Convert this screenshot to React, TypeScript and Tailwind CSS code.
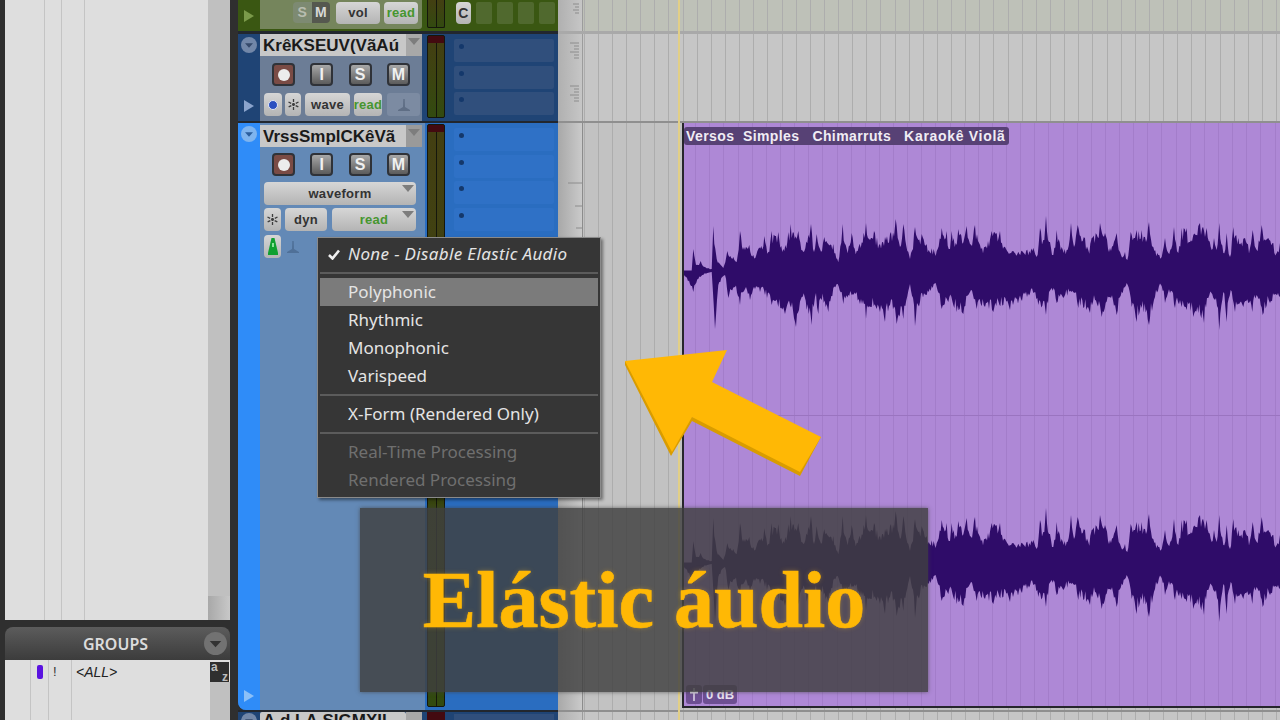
import React from "react";

const topA = [36,0.5,65,0.5,70,22,78,6,92,10,105,4,125,2,130,45,140,12,160,3,172,20,190,14,200,9,210,40,222,24,238,26,250,16,265,22,283,35,295,19,305,40,315,35,325,39,340,22,362,47,385,40,400,19,423,47,432,19,440,37,450,22,463,34,475,27,490,27,505,9,518,47,530,22,545,38,560,20,588,48,600,31,612,40,630,27,645,34,660,37,677,52,690,24,700,47,720,12,735,44,745,31,755,37,770,27,800,20,815,43,830,40,840,22,845,40,860,26,865,42,885,36,890,45,900,27,915,46,930,26,945,24,965,40,990,40,1005,24,1030,20];
const botA = [36,0.5,70,21,85,8,100,4,125,1,135,58,145,14,165,4,175,27,195,16,210,34,225,18,240,29,255,18,285,24,305,34,325,36,345,43,360,34,378,56,395,26,425,54,435,26,445,43,455,29,475,41,500,13,520,33,545,24,570,33,588,48,605,36,630,41,645,51,660,34,680,53,700,48,720,13,735,55,750,31,770,24,800,16,815,38,835,31,860,41,880,43,900,21,920,38,945,36,970,41,1000,34,1020,39];
const topB = [340,23,350,14,360,43,370,31,378,55,390,29,400,16,410,41,425,24,440,21,453,48,462,24,473,46,495,33,505,21,515,33,540,48,555,38,570,23,590,38,600,19,615,19,622,11,632,39,645,33,650,41,665,41,675,34,687,49,700,24,718,16,725,14,735,33,745,18,762,44,775,18,785,43,800,43,810,29,820,36,840,48,860,43,875,21,882,33,890,21,898,48,910,18,920,38,930,14,940,44,955,33,975,33,990,23,998,41,1010,21,1025,46,1045,33,1060,28,1070,18,1080,28];
const botB = [340,22,355,34,378,44,395,17,410,32,430,27,465,22,475,37,490,37,510,42,525,29,545,46,570,26,590,44,620,12,635,36,650,51,665,37,687,54,705,26,725,15,735,32,750,22,765,37,785,36,800,39,820,46,835,42,852,52,865,27,885,29,898,59,910,21,920,51,932,19,945,41,970,36,985,32,997,41,1010,24,1028,44,1050,32,1080,26];

function pts(a: number[], ox: number) {
  const out: [number, number][] = [];
  for (let i = 0; i < a.length; i += 2) out.push([ox + a[i] / 3, a[i + 1]]);
  return out;
}

function dense(p: [number, number][], seedStart: number) {
  let seed = seedStart;
  const rnd = () => {
    seed = (seed * 16807) % 2147483647;
    return seed / 2147483647;
  };
  const out: [number, number][] = [];
  for (let i = 0; i < p.length - 1; i++) {
    const [x0, a] = p[i];
    const [x1, b] = p[i + 1];
    out.push([x0, a]);
    const steps = Math.floor(x1 - x0);
    for (let s = 1; s < steps; s++) {
      const t = s / (x1 - x0);
      const h = a + (b - a) * t;
      out.push([x0 + (x1 - x0) * t, h * (1 - 0.3 * rnd())]);
    }
  }
  out.push(p[p.length - 1]);
  return out;
}

function wavePath(cy: number) {
  const top = dense([...pts(topA, 670), ...pts(topB, 920)], 4711);
  const bot = dense([...pts(botA, 670), ...pts(botB, 920)], 90210);
  const t = top.map(([x, h]) => `${x.toFixed(1)} ${(cy - h).toFixed(1)}`);
  const b = bot.reverse().map(([x, h]) => `${x.toFixed(1)} ${(cy + h).toFixed(1)}`);
  return `M${t.join("L")}L${b.join("L")}Z`;
}

const sans = "font-['Liberation_Sans',Arial,sans-serif]";

function Tri({ color }: { color: string }) {
  return (
    <svg width="12" height="12" viewBox="0 0 12 12">
      <path d="M1 0L11 6L1 12Z" fill={color} />
    </svg>
  );
}

function RoundArrow({ bg, fg, size = 16 }: { bg: string; fg: string; size?: number }) {
  return (
    <svg width={size} height={size} viewBox="0 0 18 18">
      <circle cx="9" cy="9" r="9" fill={bg} />
      <path d="M4.500 7H13.500L9 12Z" fill={fg} />
    </svg>
  );
}

function Caret({ color = "#7d7d7d" }: { color?: string }) {
  return (
    <svg width="12" height="7" viewBox="0 0 12 7">
      <path d="M0 0H12L6 7Z" fill={color} />
    </svg>
  );
}

function Snow() {
  return (
    <svg width="11" height="11" viewBox="0 0 11 11" stroke="#3d3d3d" strokeWidth="1.300" strokeDasharray="3 1">
      <path d="M5.500 0V11M0.500 3L10.500 8M10.500 3L0.500 8" />
    </svg>
  );
}

function Timebase({ color }: { color: string }) {
  return (
    <svg width="14" height="14" viewBox="0 0 14 14">
      <path d="M6.300 1H7.700L8 9L13 12V13H1V12L6 9Z" fill={color} />
    </svg>
  );
}

function Pill({ children, className }: { children: React.ReactNode; className: string }) {
  return (
    <div
      className={`flex items-center justify-center rounded-[4px] bg-gradient-to-b from-[#d6d6d6] to-[#b4b4b4] text-[13px] font-bold tracking-[0.3px] ${sans} ${className}`}
    >
      {children}
    </div>
  );
}

function Square({ letter, rec }: { letter?: string; rec?: boolean }) {
  return (
    <div
      className={`flex h-[23px] w-[23px] items-center justify-center rounded-[4px] border-2 border-[#2f3238] ${
        rec ? "bg-[#7a4b45]" : "bg-gradient-to-b from-[#a8a8a8] to-[#5c5c5c]"
      } text-[16px] font-bold leading-none text-[#f0f0f0] ${sans}`}
    >
      {rec ? <div className="h-[12px] w-[12px] rounded-full bg-[#ececec]" /> : letter}
    </div>
  );
}

function RecRow() {
  return (
    <div className="flex w-[138px] justify-between">
      <Square rec />
      <Square letter="I" />
      <Square letter="S" />
      <Square letter="M" />
    </div>
  );
}

function NameBar({ name, caretBg }: { name: string; caretBg: string }) {
  return (
    <div className="flex h-[22px] w-[162px]">
      <div
        className={`flex flex-1 items-center overflow-hidden whitespace-nowrap bg-[#c8c8c8] pl-[3px] text-[17px] font-bold leading-none text-[#1a1a1a] ${sans}`}
      >
        {name}
      </div>
      <div className={`flex w-[16px] justify-center pt-[4px] ${caretBg}`}>
        <Caret />
      </div>
    </div>
  );
}

function Meter({ h, className = "" }: { h: string; className?: string }) {
  return (
    <div className={`flex w-[18px] flex-col overflow-hidden rounded-[2px] border border-[#15170c] bg-[#15170c] ${h} ${className}`}>
      <div className="h-[7px] shrink-0 bg-[#430a10]" />
      <div className="flex flex-1 gap-[1px]">
        <div className="flex-1 bg-gradient-to-b from-[#433f12] to-[#324a10]" />
        <div className="flex-1 bg-gradient-to-b from-[#433f12] to-[#324a10]" />
      </div>
    </div>
  );
}

function Cell({ className }: { className: string }) {
  return (
    <div className={`h-[23px] w-[100px] rounded-[2px] pl-[5px] pt-[5px] ${className}`}>
      <div className="h-[5px] w-[5px] rounded-full bg-[#14386b]" />
    </div>
  );
}

function Ticks() {
  const lines = [];
  for (const start of [9, 52]) {
    for (let i = 0; i < 6; i++) {
      const y = start + i * 3;
      lines.push(<path key={`${start}-${i}`} d={`M${i % 3 === 0 ? 12 : 16} ${y}H21`} stroke="#8c8c8c" strokeWidth="1" />);
    }
  }
  return (
    <svg width="24" height="87" viewBox="0 0 24 87">
      {lines}
    </svg>
  );
}

function TopTicks() {
  return (
    <svg width="24" height="31" viewBox="0 0 24 31">
      <path d="M15 4H21M17 7H21M15 10H21M17 13H21" stroke="#8c8c8c" strokeWidth="1" />
    </svg>
  );
}

function BigTicks() {
  return (
    <svg width="24" height="120" viewBox="0 0 24 120">
      <path d="M10 60H24M17 83H24M18 105H24" stroke="#8c8c8c" strokeWidth="1" />
    </svg>
  );
}

const gridGray =
  "bg-[repeating-linear-gradient(90deg,transparent_0_0.7px,#adadad_0.7px_1.7px,transparent_1.7px_14.13px)]";

export default function App() {
  return (
    <div className={`relative flex h-[720px] w-[1280px] overflow-hidden bg-[#2f2f2f] ${sans}`}>
      {/* Left sidebar */}
      <div className="flex w-[238px] shrink-0 flex-col pl-[5px] pr-[8px]">
        <div className="flex h-[620px] shrink-0 bg-[#dedede]">
          <div className="w-[40px] border-r border-[#c4c4c4]" />
          <div className="w-[17px] border-r border-[#c4c4c4]" />
          <div className="w-[23px] border-r border-[#c4c4c4]" />
          <div className="flex-1" />
          <div className="flex w-[22px] flex-col justify-end bg-[#c0c0c0]">
            <div className="h-[24px] bg-gradient-to-r from-[#a8a8a8] to-[#c8c8c8]" />
          </div>
        </div>
        <div className="mt-[7px] flex h-[33px] shrink-0 items-center rounded-t-[8px] bg-gradient-to-b from-[#5c5c5c] to-[#3c3c3c] pr-[3px]">
          <div className="flex-1 pl-[22px] text-center text-[16px] font-semibold text-[#dcdcdc] font-['Noto_Sans',sans-serif]">GROUPS</div>
          <RoundArrow bg="#727272" fg="#333333" size={23} />
        </div>
        <div className="flex flex-1 bg-[#dedede]">
          <div className="w-[26px] border-r border-[#c4c4c4]" />
          <div className="flex w-[18px] justify-center border-r border-[#c4c4c4]">
            <div className="flex w-full gap-[4px] pl-[6px] pt-[5px]">
              <div className="h-[14px] w-[6px] rounded-[2px] bg-[#5a12e0]" />
            </div>
          </div>
          <div className="w-[23px] border-r border-[#c4c4c4] pl-[4px] pt-[3px] text-[13px] leading-[18px] text-[#333]">!</div>
          <div className="flex-1 pl-[4px] pt-[3px] text-[14px] italic leading-[18px] text-[#222]">&lt;ALL&gt;</div>
          <div className="flex w-[20px] flex-col">
            <div className="mt-[2px] flex h-[20px] w-[19px] flex-col bg-[#2f2f2f] px-[1px] text-[12px] font-bold leading-[10px] text-[#bdbdbd]">
              <span className="self-start">a</span>
              <span className="self-end">z</span>
            </div>
            <div className="flex-1 bg-[#c0c0c0]" />
          </div>
        </div>
      </div>

      {/* Track rows */}
      <div className="flex flex-1 flex-col">
        {/* Green track */}
        <div className="flex h-[31px] shrink-0">
          <div className="flex w-[320px] bg-[#3a5712]">
            <div className="flex w-[22px] items-end justify-center pb-[9px]">
              <Tri color="#7b9a4a" />
            </div>
            <div className="flex h-[29px] w-[162px] items-start rounded-br-[3px] bg-[#75855c] pl-[33px] pt-[2px]">
              <div className="flex h-[21px] w-[37px] overflow-hidden rounded-[4px] text-[14px] font-bold leading-[21px] text-[#d8d8d8]">
                <div className="w-1/2 bg-[#7d8a72] text-center text-[#b8bdb0]">S</div>
                <div className="w-1/2 bg-[#55584f] text-center">M</div>
              </div>
              <Pill className="ml-[6px] h-[22px] w-[44px] text-[#333]">vol</Pill>
              <Pill className="ml-[4px] h-[22px] w-[34px] text-[#46962f]">read</Pill>
            </div>
            <Meter h="h-[28px]" className="ml-[5px] rounded-t-none border-t-0 [&>div:first-child]:hidden" />
            <div className="ml-[11px] mt-[2px] flex h-[22px] items-start gap-[5px]">
              <Pill className="h-[22px] w-[15px] text-[14px] text-[#333]">C</Pill>
              <div className="h-[22px] w-[16px] rounded-[2px] bg-[#50692e]" />
              <div className="h-[22px] w-[16px] rounded-[2px] bg-[#50692e]" />
              <div className="h-[22px] w-[16px] rounded-[2px] bg-[#50692e]" />
              <div className="h-[22px] w-[16px] rounded-[2px] bg-[#50692e]" />
            </div>
          </div>
          <div className="w-[24px] bg-gradient-to-r from-[#b0b0b0] to-[#c6c6c6]">
            <TopTicks />
          </div>
          <div className={`flex-1 border-l border-[#9c9c9c] bg-[#bec1b8] ${gridGray}`} />
        </div>
        <div className="flex h-[3px] shrink-0">
          <div className="w-[320px] bg-[#22272e]" />
          <div className="flex-1 bg-[#a9a9a9]" />
        </div>

        {/* Blue track */}
        <div className="flex h-[87px] shrink-0">
          <div className="flex w-[320px] bg-[#1f4475]">
            <div className="flex w-[22px] flex-col items-center justify-between pb-[9px] pt-[3px]">
              <RoundArrow bg="#7287a8" fg="#35496a" />
              <Tri color="#8ba4cc" />
            </div>
            <div className="flex w-[162px] flex-col bg-[#6c7d96]">
              <NameBar name="KrêKSEUV(VãAú" caretBg="bg-[#a8a8a8]" />
              <div className="mt-[7px] flex pl-[12px]">
                <RecRow />
              </div>
              <div className="ml-[4px] mt-[7px] flex items-center">
                <Pill className="h-[23px] w-[18px]">
                  <div className="h-[10px] w-[10px] rounded-full border border-[#dfe5f4] bg-[#2a4fc0]" />
                </Pill>
                <Pill className="ml-[3px] h-[23px] w-[16px]">
                  <Snow />
                </Pill>
                <Pill className="ml-[4px] h-[23px] w-[45px] text-[#333]">wave</Pill>
                <Pill className="ml-[4px] h-[23px] w-[28px] overflow-hidden text-[#46962f]">read</Pill>
                <div className="ml-[5px] flex h-[23px] w-[33px] items-center justify-center rounded-[3px] bg-[#7c8ba2]">
                  <Timebase color="#5f6e85" />
                </div>
              </div>
            </div>
            <Meter h="h-[83px]" className="ml-[5px] mt-[1px]" />
            <div className="ml-[9px] flex flex-col gap-[3.5px] pt-[5px]">
              <Cell className="bg-[#304f7c]" />
              <Cell className="bg-[#304f7c]" />
              <Cell className="bg-[#304f7c]" />
            </div>
          </div>
          <div className="w-[24px] bg-gradient-to-r from-[#b0b0b0] to-[#c6c6c6]">
            <Ticks />
          </div>
          <div className={`flex-1 border-l border-[#9c9c9c] bg-[#c6c6c6] ${gridGray}`} />
        </div>
        <div className="flex h-[2px] shrink-0">
          <div className="w-[320px] bg-[#22272e]" />
          <div className="flex-1 bg-[#8f8f8f]" />
        </div>

        {/* Selected track */}
        <div className="flex h-[587px] shrink-0">
          <div className="flex w-[320px] rounded-bl-[8px] bg-[#2a6dc0]">
            <div className="flex w-[22px] flex-col items-center justify-between rounded-bl-[8px] bg-[#2f8cf8] pb-[8px] pt-[3px]">
              <RoundArrow bg="#7fb4ee" fg="#2b5e9d" />
              <Tri color="#8cc0f8" />
            </div>
            <div className="flex w-[165px] flex-col bg-[#6389b6]">
              <div className="mt-[2px]">
                <NameBar name="VrssSmplCKêVã" caretBg="bg-[#9a9a9a]" />
              </div>
              <div className="mt-[6px] flex pl-[12px]">
                <RecRow />
              </div>
              <Pill className="relative ml-[4px] mt-[6px] h-[23px] w-[152px] text-[#333]">
                waveform
                <div className="absolute right-[2px] top-[3px]">
                  <Caret />
                </div>
              </Pill>
              <div className="ml-[4px] mt-[3px] flex">
                <Pill className="h-[23px] w-[17px]">
                  <Snow />
                </Pill>
                <Pill className="ml-[4px] h-[23px] w-[42px] text-[#333]">dyn</Pill>
                <Pill className="relative ml-[5px] h-[23px] w-[84px] text-[#46962f]">
                  read
                  <div className="absolute right-[2px] top-[3px]">
                    <Caret />
                  </div>
                </Pill>
              </div>
              <div className="ml-[4px] mt-[4px] flex items-center">
                <Pill className="h-[23px] w-[17px]">
                  <svg width="10" height="17" viewBox="0 0 10 17">
                    <path d="M3.500 0H6.500L10 15V17H0V15Z" fill="#10a030" />
                    <path d="M4 5H6V9H4Z" fill="#8ae29a" />
                  </svg>
                </Pill>
                <div className="ml-[5px]">
                  <Timebase color="#4f7098" />
                </div>
              </div>
            </div>
            <div className="flex flex-col">
              <Meter h="h-[583px]" className="ml-[2px] mt-[1px]" />
            </div>
            <div className="ml-[9px] flex flex-col gap-[3.5px] pt-[5px]">
              <Cell className="bg-[#2f71c6]" />
              <Cell className="bg-[#2f71c6]" />
              <Cell className="bg-[#2f71c6]" />
              <Cell className="bg-[#2f71c6]" />
            </div>
          </div>
          <div className="w-[24px] bg-gradient-to-r from-[#a8a8a8] to-[#cacaca]">
            <BigTicks />
          </div>
          <div className={`flex flex-1 border-l border-[#8c8c8c] bg-[#c2c2c2] ${gridGray} pl-[99px]`}>
            <div className="relative mb-[2px] flex-1 border-b-2 border-l-2 border-[#26262c] bg-[#ae88d6] bg-[repeating-linear-gradient(90deg,transparent_0_11.2px,#a37dca_11.2px_12.2px,transparent_12.2px_14.13px)]">
              <div className="absolute inset-x-0 top-[292px] h-[1px] bg-[#9a74c0]" />
              <svg className="absolute inset-0 h-[585px] w-[596px]" viewBox="684 123 596 585">
                <path d={wavePath(271)} fill="#2f0c69" />
                <path d={wavePath(563)} fill="#2f0c69" />
              </svg>
              <div className="absolute left-0 top-[4px] flex h-[18px] items-center gap-[13px] whitespace-pre rounded-[3px] bg-[#574175] pl-[2px] pr-[3px] text-[14px] font-bold tracking-[0.4px] text-[#f0ecf4]">
                <span>Versos  Simples</span>
                <span>Chimarruts</span>
                <span className="tracking-[0.7px]">Karaokê Violã</span>
              </div>
              <div className="absolute bottom-[2px] left-[2px] flex h-[19px] items-center gap-[1px] text-[13px] font-bold text-[#e8e2f0]">
                <div className="flex h-[19px] w-[16px] items-center justify-center rounded-[3px] bg-[#6d4f92]">
                  <svg width="8" height="13" viewBox="0 0 8 13" fill="#e8e2f0">
                    <path d="M3.300 0H4.700V3H8V5.500H4.700V13H3.300V5.500H0V3H3.300Z" />
                  </svg>
                </div>
                <div className="rounded-[3px] bg-[#6d4f92] px-[3px] leading-[19px]">0 dB</div>
              </div>
            </div>
          </div>
        </div>
        <div className="flex h-[2px] shrink-0">
          <div className="w-[320px] bg-[#22272e]" />
          <div className="flex-1 bg-[#8f8f8f]" />
        </div>

        {/* Next track */}
        <div className="flex min-h-0 flex-1 overflow-hidden">
          <div className="flex w-[320px] bg-[#1f4475]">
            <div className="flex w-[22px] justify-center pt-[1px]">
              <RoundArrow bg="#7287a8" fg="#35496a" />
            </div>
            <div className="flex w-[165px]">
              <div className="h-full w-[146px] overflow-hidden rounded-t-[2px] bg-[#c8c8c8] pl-[3px] text-[17px] font-bold leading-[18px] text-[#1a1a1a]">
                A.d.LA.SIGMXII
              </div>
              <div className="w-[16px] bg-[#a8a8a8]" />
            </div>
            <div className="ml-[2px] w-[18px] bg-[#430a10]" />
            <div className="ml-[9px] mt-[2px] w-[100px] bg-[#304f7c]" />
          </div>
          <div className="w-[24px] bg-gradient-to-r from-[#b0b0b0] to-[#c6c6c6]" />
          <div className={`flex-1 border-l border-[#9c9c9c] bg-[#c6c6c6] ${gridGray}`} />
        </div>
      </div>

      {/* Playhead line */}
      <div className="absolute left-[678px] top-0 h-full w-[2px] bg-[#e2cf86]" />

      {/* Popup menu */}
      <div className="absolute left-[317px] top-[237px] h-[261px] w-[284px] border border-[#8a8a8a] bg-[#363636] px-[2px] pt-[2px] text-[17px] leading-[28px] text-[#e4e4e4] shadow-[2px_2px_3px_rgba(0,0,0,0.45)] font-['Noto_Sans',sans-serif]">
        <div className="relative h-[28px] pl-[28px] italic tracking-[0.36px]">
          <svg className="absolute left-[8px] top-[9px]" width="12" height="11" viewBox="0 0 12 11">
            <path d="M1 6L4.500 9.500L11 1.500" fill="none" stroke="#f0f0f0" strokeWidth="2.600" />
          </svg>
          None - Disable Elastic Audio
        </div>
        <div className="flex h-[10px] items-center">
          <div className="h-[2px] w-full bg-[#5c5c5c]" />
        </div>
        <div className="h-[28px] bg-[#7b7b7b] pl-[28px]">Polyphonic</div>
        <div className="h-[28px] pl-[28px]">Rhythmic</div>
        <div className="h-[28px] pl-[28px]">Monophonic</div>
        <div className="h-[28px] pl-[28px]">Varispeed</div>
        <div className="flex h-[10px] items-center">
          <div className="h-[2px] w-full bg-[#5c5c5c]" />
        </div>
        <div className="h-[28px] pl-[28px]">X-Form (Rendered Only)</div>
        <div className="flex h-[10px] items-center">
          <div className="h-[2px] w-full bg-[#5c5c5c]" />
        </div>
        <div className="h-[28px] pl-[28px] text-[#6f6f6f]">Real-Time Processing</div>
        <div className="h-[28px] pl-[28px] text-[#6f6f6f]">Rendered Processing</div>
      </div>

      {/* Arrow */}
      <svg className="absolute left-[620px] top-[345px]" width="205" height="135" viewBox="620 345 205 135">
        <path d="M625 361L625 365L671 456L692 421L800 476L821 437L692 417Z" fill="#d99c00" />
        <path d="M625 361L727 350L712 382L821 437L800 472L692 417L672 452Z" fill="#ffb805" />
      </svg>

      {/* Caption banner */}
      <div className="absolute left-[360px] top-[508px] flex h-[184px] w-[568px] items-center justify-center bg-[#404040]/[0.82] shadow-[0_0_4px_rgba(64,64,64,0.7)]">
        <span className="text-[80px] font-bold leading-none text-[#ffb805] font-['Liberation_Serif',serif] [-webkit-text-stroke:0.6px_#ffb805] [text-shadow:0_0_5px_rgba(255,190,40,0.35)]">
          Elástic áudio
        </span>
      </div>
    </div>
  );
}
